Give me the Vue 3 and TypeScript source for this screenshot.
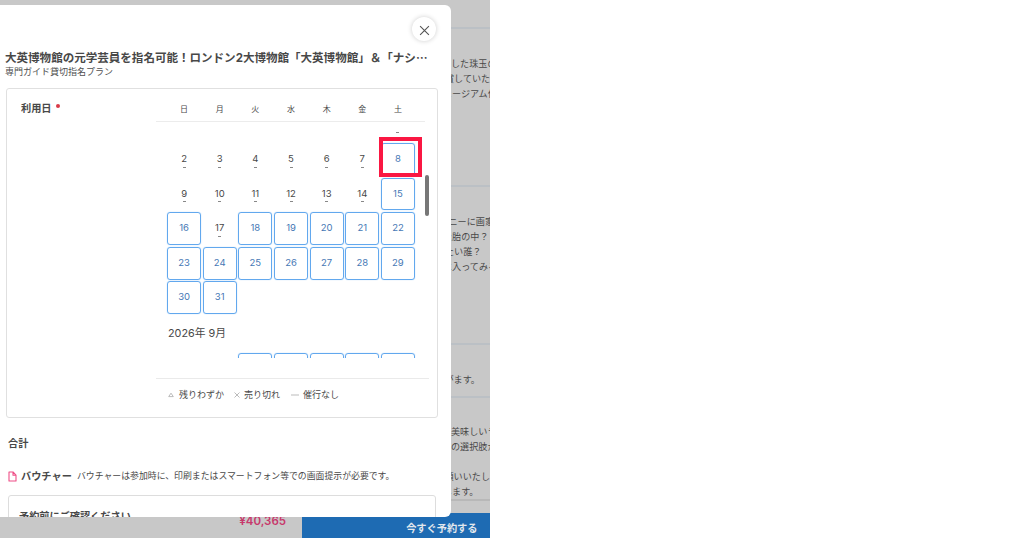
<script setup lang="ts">
interface Day { label: string; open: boolean; closed?: boolean; marked?: boolean }

const weekdays: string[] = ['日', '月', '火', '水', '木', '金', '土']
const closedDays = new Set<number>([1, 2, 3, 4, 5, 6, 7, 9, 10, 11, 12, 13, 14, 17])

const blank = (): Day => ({ label: '', open: false })
const august: Day[] = [
  ...Array.from({ length: 6 }, blank),
  ...Array.from({ length: 31 }, (_, i): Day => ({
    label: i === 0 ? '' : String(i + 1),
    open: !closedDays.has(i + 1),
    closed: closedDays.has(i + 1),
    marked: i + 1 === 8,
  })),
]
const september: Day[] = [
  blank(),
  blank(),
  ...Array.from({ length: 5 }, (): Day => ({ label: '', open: true })),
]
</script>

<template>
  <div class="stage">
    <div class="page">
      <section class="block first"></section>
      <section class="block b1">
        <p class="n0">した珠玉の</p>
        <p class="n5">賞していた</p>
        <p class="n7">ュージアム付</p>
      </section>
      <section class="block b2">
        <p class="n1">ニーに画家</p>
        <p class="n7">た胎の中？</p>
        <p class="n5">たい誰？</p>
        <p class="n7">に入ってみる</p>
      </section>
      <section class="block b3"><p class="n6">がます。</p></section>
      <section class="block b4">
        <p class="n0">美味しいラ</p>
        <p class="n0">の選択肢が</p>
        <p class="n6 later">願いいたし</p>
        <p class="n7">します。</p>
      </section>
      <footer class="buybar">
        <span class="price">¥40,365</span>
        <span class="buy">今すぐ予約する</span>
      </footer>
    </div>

    <div class="modal">
      <button class="close" aria-label="閉じる">
        <svg viewBox="0 0 10 10"><path d="M1 1L9 9M9 1L1 9" /></svg>
      </button>
      <h1>大英博物館の元学芸員を指名可能！ロンドン2大博物館「大英博物館」＆「ナシ<span>…</span></h1>
      <p class="plan">専門ガイド貸切指名プラン</p>

      <div class="card">
        <div class="label">利用日 <i></i></div>
        <div class="calendar">
          <div class="week">
            <span v-for="w in weekdays" :key="w">{{ w }}</span>
          </div>
          <div class="scroller">
            <div class="days august">
              <div v-for="(d, i) in august" :key="i" class="day" :class="{ open: d.open }">
                <span>{{ d.label }}</span>
                <b v-if="d.closed"></b>
                <em v-if="d.marked"></em>
              </div>
            </div>
            <div class="month">2026年 9月</div>
            <div class="days">
              <div v-for="(d, i) in september" :key="i" class="day" :class="{ open: d.open }"></div>
            </div>
            <div class="thumb"></div>
          </div>
          <div class="legend">
            <svg viewBox="0 0 6 6"><path d="M3 1.2L5.3 4.6H.7Z" /></svg><span>残りわずか</span>
            <svg class="sold" viewBox="0 0 6 6"><path d="M.5 .5L5.5 5.5M5.5 .5L.5 5.5" /></svg><span>売り切れ</span>
            <svg class="none" viewBox="0 0 8 6"><path d="M0 3H8" /></svg><span>催行なし</span>
          </div>
        </div>
      </div>

      <div class="total">合計</div>
      <div class="voucher">
        <svg viewBox="0 0 9 11"><path d="M1 1H5L8 4.2V10H1ZM5 1V4.2H8" /></svg>
        <strong>バウチャー</strong>
        <span>バウチャーは参加時に、印刷またはスマートフォン等での画面提示が必要です。</span>
      </div>
      <div class="notice">予約前にご確認ください</div>
    </div>
  </div>
</template>

<style>
body { background: #fff; }
</style>

<style scoped>
* { box-sizing: border-box; }
p, h1 { margin: 0; }
.stage {
  position: relative;
  width: 490px;
  height: 538px;
  overflow: hidden;
  background: #c8c8c8;
  color: #484848;
  font-family: Inter, "Noto Sans CJK JP", sans-serif;
}
.page { height: 538px; display: flex; flex-direction: column; }
.block { flex: none; border-bottom: 2px solid #bbc0c5; padding-left: 451px; overflow: hidden; }
.block p { font-size: 9.1px; line-height: 15px; white-space: nowrap; color: #484848; }
.first { height: 29px; }
.b1 { height: 158px; padding-top: 27px; }
.b2 { height: 158px; padding-top: 27px; }
.b3 { height: 53px; padding-top: 27px; }
.b4 { height: 103px; padding-top: 26px; border-color: #b8b8b8; }
.n1 { margin-left: -2.5px; }
.n5 { margin-left: -6px; }
.n6 { margin-left: -6.5px; }
.n7 { margin-left: -8px; }
.block .later { margin-top: 15px; }
.buybar { flex: 1; display: flex; padding-top: 12px; }
.price { width: 302px; padding: 0 16px 0 0; text-align: right; font-size: 11.5px; line-height: 17px; font-weight: 600; color: #c7386b; }
.buy { flex: 1; background: #1e6bb3; color: #e3e8ed; font-size: 10.2px; font-weight: 700; line-height: 31px; text-align: right; padding-right: 12.5px; }

.modal {
  position: absolute;
  left: 0;
  top: 5px;
  width: 451px;
  height: 512px;
  overflow: hidden;
  background: #fff;
  border-radius: 0 6px 6px 0;
  padding: 44px 13px 0 6px;
}
.close {
  position: absolute;
  right: 15px;
  top: 12px;
  width: 24px;
  height: 24px;
  border: 0;
  padding: 0;
  border-radius: 50%;
  background: #fff;
  box-shadow: 0 0 5px rgba(0, 0, 0, .2);
  display: grid;
  place-items: center;
}
svg { fill: none; display: block; flex: none; }
.close svg { width: 11px; height: 11px; stroke: #555; stroke-width: 1; margin-top: 2px; }
h1 { font-size: 11.54px; line-height: 16px; font-weight: 700; white-space: nowrap; margin-left: -1px; }
h1 span { font-family: "Noto Sans CJK JP", sans-serif; }
.plan { font-size: 9px; line-height: 12px; margin-left: -1px; color: #505050; }
.card {
  display: flex;
  height: 330px;
  margin-top: 10px;
  border: 1px solid #e0e0e0;
  border-radius: 3px;
}
.label { width: 149px; padding: 12px 0 0 14px; font-size: 10.2px; line-height: 15px; font-weight: 700; display: flex; }
.label i { width: 4px; height: 4px; border-radius: 50%; background: #d93a48; margin: 3px 0 0 4px; }
.calendar { width: 274px; }
.week, .days { display: grid; grid-template-columns: repeat(7, 33.8px); column-gap: 1.85px; padding-left: 11.2px; }
.week { height: 33px; width: 269px; border-bottom: 1px solid #ececec; line-height: 40px; font-size: 8px; text-align: center; }
.scroller { position: relative; height: 236px; overflow: hidden; }
.days { grid-auto-rows: 32.7px; row-gap: 1.9px; }
.august { margin-top: -13.5px; }
.day { position: relative; display: flex; flex-direction: column; align-items: center; font-size: 9.5px; line-height: 31px; }
.day b { position: absolute; top: 23.6px; width: 3px; height: 1px; background: #888; }
.day.open { border: 1px solid #62a8ee; box-shadow: 0 0 1px #8ec2f5; border-radius: 3px; color: #4678b5; line-height: 29px; }
.day em { position: absolute; left: -3px; top: -7px; width: 43px; height: 39.5px; border: 4px solid #fa1742; }
.month { margin-left: 12px; height: 38.5px; padding-top: 10px; font-size: 10.8px; line-height: 19px; }
.thumb { position: absolute; right: 1px; top: 53px; width: 4.5px; height: 41px; border-radius: 3px; background: #777; }
.legend { margin-top: 20px; width: 273px; border-top: 1px solid #eaeaea; height: 32px; padding-left: 12px; display: flex; align-items: center; font-size: 9px; line-height: 14px; }
.legend svg { width: 6px; height: 6px; margin-right: 5px; stroke: #aaa; stroke-width: .8; }
.legend .sold { margin-left: 10px; margin-right: 4px; }
.legend .none { width: 8px; margin-left: 11px; margin-right: 4px; }
.total { margin: 18px 0 0 2px; font-size: 10.2px; font-weight: 700; line-height: 15px; }
.voucher { display: flex; align-items: center; height: 16px; margin: 17px 0 0 2px; white-space: nowrap; }
.voucher svg { width: 9px; height: 11px; margin-right: 4px; stroke: #ee4f87; stroke-width: 1.1; stroke-linejoin: round; }
.voucher strong { width: 56px; font-size: 10.2px; line-height: 16px; }
.voucher span { font-size: 8.87px; line-height: 16px; }
.notice { height: 60px; margin: 11px 2px 0 2px; border: 1px solid #ddd; border-radius: 3px; padding: 11px 10px; font-size: 10.2px; font-weight: 700; line-height: 18px; }
</style>
